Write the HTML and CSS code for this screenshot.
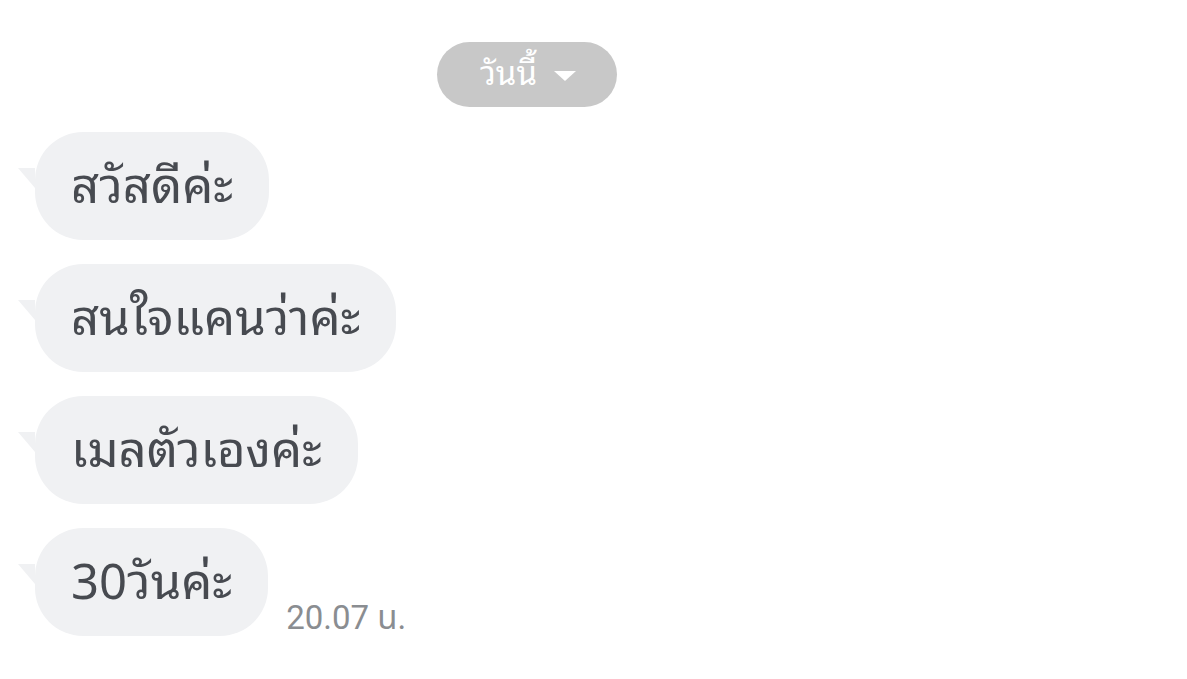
FILE: index.html
```html
<!DOCTYPE html>
<html lang="th">
<head>
<meta charset="utf-8">
<link rel="stylesheet" href="styles.css">
</head>
<body>
<div class="chat">
  <div class="date-row">
    <div class="date-pill"><span class="date-text">วันนี้</span><span class="caret"></span></div>
  </div>
  <div class="msg"><div class="bubble tail">สวัสดีค่ะ</div></div>
  <div class="msg"><div class="bubble tail">สนใจแคนว่าค่ะ</div></div>
  <div class="msg"><div class="bubble tail">เมลตัวเองค่ะ</div></div>
  <div class="msg"><div class="bubble tail">30วันค่ะ</div><div class="time">20.07 น.</div></div>
</div>
</body>
</html>
```
FILE: styles.css
```css
html, body { margin: 0; padding: 0; background: #ffffff; }
body { font-family: "Noto Sans Thai Looped", "Thonburi", "Garuda", "Loma", "Tlwg Typo", "Noto Sans Thai", "Noto Sans", sans-serif; width: 1187px; height: 679px; overflow: hidden; }
.chat { display: flex; flex-direction: column; padding: 42px 0 0 35px; gap: 24px; }
.date-row { width: 984px; display: flex; justify-content: center; margin-bottom: 1px; }
.date-pill { height: 65px; width: 180px; border-radius: 33px; background: #c8c8c8; color: #ffffff; font-size: 33px; font-weight: 400; display: flex; align-items: center; justify-content: center; gap: 17px; box-sizing: border-box; padding: 0 0 8px 2px; }
.date-text { line-height: 1; }
.caret { width: 0; height: 0; border-left: 11px solid transparent; border-right: 11px solid transparent; border-top: 10px solid #ffffff; margin-top: 10px; }
.msg { display: flex; align-items: flex-end; gap: 18px; }
.bubble { position: relative; height: 108px; border-radius: 48px; background: #f0f1f3; color: #474a50; font-size: 49px; padding: 0 36px 10px; display: flex; align-items: center; box-sizing: border-box; }
.tail::before { content: ""; position: absolute; left: -17px; top: 36px; width: 0; height: 0; border-top: 20px solid #f0f1f3; border-left: 17px solid transparent; }
.time { font-size: 33px; color: #8a8d91; line-height: 1; padding-bottom: 2px; font-family: Roboto, "Noto Sans Thai", sans-serif; }
```
